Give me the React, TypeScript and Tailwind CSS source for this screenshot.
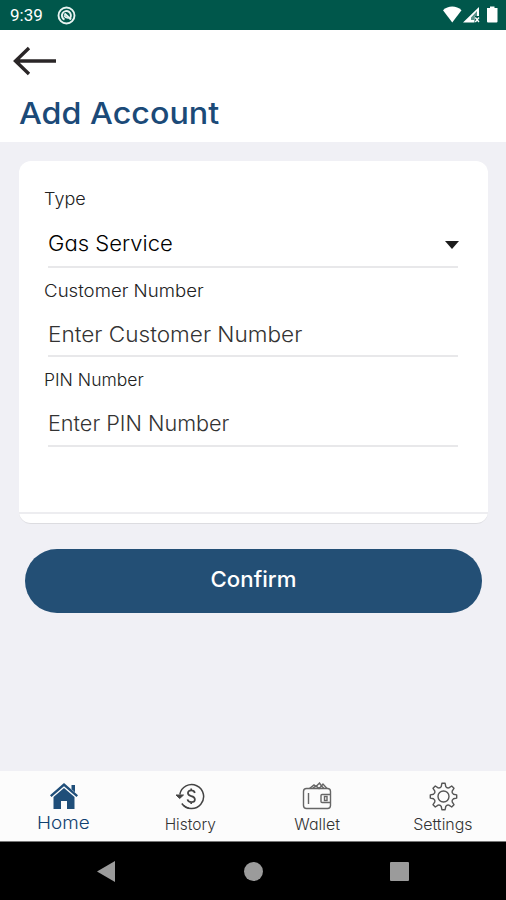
import type { ReactNode } from "react";

function StatusBar() {
  return (
    <div className="flex h-[30px] items-center bg-[#00574b] pr-[7px] pl-[10px] text-white">
      <span className="pt-px font-[Roboto,sans-serif] text-[17px] leading-none">9:39</span>
      <svg className="ml-[14px]" width="19" height="19" viewBox="0 0 19 19" fill="none" stroke="#e8f3f1">
        <circle cx="9.5" cy="9.5" r="8" strokeWidth="1.9" />
        <path d="M7.500 13.600A4.500 4.500 0 1 1 12.800 12.500" strokeWidth="1.900" />
        <path d="m7.500 7.500 6.500 6" strokeWidth="2.200" />
        <path d="M7 9.500q2 3 4.500 2.500" strokeWidth="1.500" />
      </svg>
      <svg className="ml-auto" width="56" height="18" viewBox="0 0 56 18" fill="#fff">
        <path d="M0 4.200C5-.6 13.500-.6 18.500 4.200L9.250 16.500z" />
        <path d="M36 1v9h-4.500v6.500H20z" />
        <path d="M28 11.500 34 5v5h-3v4h-3z" fill="#00574b" opacity=".65" />
        <path d="m32.300 11.500 3.700 4.500m0-4.500-3.700 4.500" stroke="#fff" strokeWidth="1.300" />
        <path d="M47 .5h4.500V2H54.500v13.500q0 1-1 1h-8.500q-1 0-1-1V2h3z" />
      </svg>
    </div>
  );
}

function Label({ children, className }: { children: ReactNode; className: string }) {
  return (
    <div className={`origin-left pl-px text-[17px] leading-[24px] font-light whitespace-nowrap text-[#222] ${className}`}>
      {children}
    </div>
  );
}

function Field({ children, className }: { children: ReactNode; className: string }) {
  return (
    <div className={`mx-[5px] flex items-center border-b-2 border-[#e8e8ea] whitespace-nowrap ${className}`}>
      {children}
    </div>
  );
}

function HomeIcon() {
  return (
    <svg width="30" height="28" viewBox="0 0 30 28" fill="#1f4e79">
      <path d="M15 1 29 13.300 27.500 15 15 4.200 2.500 15 1 13.300z" />
      <path d="M22.500 3h3.500v7.200l-3.500-3z" />
      <path d="M15 6 25.500 15v12H18v-8h-6v8H4.500V15z" />
    </svg>
  );
}

function HistoryIcon() {
  return (
    <svg width="30" height="28" viewBox="0 0 30 28" fill="none" stroke="#444" strokeWidth="1.500">
      <path d="M4.800 12.500A12 12 0 1 1 6.800 21.500" />
      <path d="M8.300 23.300A12 12 0 0 0 14 26.200" />
      <path d="M1 13 4.700 16.500 8.500 13z" fill="#444" strokeWidth="1" />
      <path d="M19.800 11q-.5-2.600-3.600-2.600-3.300 0-3.300 2.700 0 2.300 3.300 3 3.700.8 3.700 3.300 0 2.700-3.600 2.700-3.300 0-3.800-2.700M16.200 6.600v2M16.200 20v2" strokeWidth="1.700" />
    </svg>
  );
}

function WalletIcon() {
  return (
    <svg width="30" height="28" viewBox="0 0 30 28" fill="none" stroke="#666" strokeWidth="1.400">
      <rect x="1.500" y="6.500" width="27" height="20" rx="3" />
      <path d="m7.500 6.500 4.500-3.500 2 1.500L17.500 1l2 3L21 2l4 4.500M10.500 6.500l3.500-2.500 3 2.500 2.500-2.500 2.500 2.500" />
      <path d="M6.500 11v11" />
      <path d="M28.500 12.500h-8.500q-1 0-1 1v6q0 1 1 1h8.500" />
      <rect x="22.500" y="14.500" width="2.500" height="4" />
    </svg>
  );
}

const TEETH = [0, 45, 90, 135, 180, 225, 270, 315];

// The gear outline repeats one tooth and one valley eight times round the centre.
function gearPath() {
  const point = (radius: number, degrees: number) => {
    const a = (degrees * Math.PI) / 180;
    return `${(14.5 + radius * Math.cos(a)).toFixed(2)} ${(14.5 + radius * Math.sin(a)).toFixed(2)}`;
  };
  return (
    TEETH.map(
      (t, i) =>
        `${i === 0 ? "M" : "L"}${point(10.2, t - 13)}L${point(13.3, t - 7)}L${point(13.3, t + 7)}L${point(10.2, t + 13)}Q${point(8.8, t + 22.5)} ${point(10.2, t + 32)}`,
    ).join("") + "Z"
  );
}

function SettingsIcon() {
  return (
    <svg width="29" height="29" viewBox="0 0 29 29" fill="none" stroke="#555" strokeWidth="1.400" strokeLinejoin="round">
      <path d={gearPath()} />
      <circle cx="14.500" cy="14.500" r="5.500" />
    </svg>
  );
}

function Tab({ icon, label, className }: { icon: ReactNode; label: string; className: string }) {
  return (
    <div className="flex flex-1 flex-col items-center pt-[10px] pl-px">
      <div className="flex h-[30px] items-center">{icon}</div>
      <div className={`leading-[20px] ${className}`}>{label}</div>
    </div>
  );
}

export default function App() {
  return (
    <div className="flex h-[900px] w-[506px] flex-col overflow-hidden bg-[#f0f0f5] font-[Inter,'Liberation_Sans',sans-serif] [font-feature-settings:'cv11']">
      <StatusBar />
      <header className="h-[112px] bg-white">
        <svg className="mt-[16px] ml-[12px]" width="46" height="30" viewBox="0 0 46 30" fill="none" stroke="#2a2627" strokeWidth="3.400">
          <path d="M3 15h41M17 2 3.500 15 17 28" />
        </svg>
        <h1 className="mt-[17px] ml-[19px] w-[300px] origin-left scale-x-[1.075] text-[30px] leading-[40px] font-medium text-[#1b4a78]">Add Account</h1>
      </header>

      <main className="flex-1 pt-[19px] pr-[18px] pl-[19px]">
        <section className="h-[363px] rounded-[12px] border-b border-[#dcdce0] bg-white">
          <div className="h-[353px] border-b-2 border-[#ededf0] pt-[26px] pr-[25px] pl-[24px]">
            <Label className="scale-x-[1.060]">Type</Label>
            <Field className="h-[57px] pt-[10px] text-[21px] font-light text-black">
              <span className="origin-left scale-x-[1.050]">Gas Service</span>
              <svg className="mt-[3px] -mr-px ml-auto" width="14" height="8" viewBox="0 0 14 8" fill="#1c1c1c">
                <path d="M0 0h14L7 8z" />
              </svg>
            </Field>
            <Label className="mt-[11px] scale-x-[1.095]">Customer Number</Label>
            <Field className="h-[54px] pt-[11px] text-[21px] font-light text-[#333]">
              <span className="origin-left scale-x-[1.075]">Enter Customer Number</span>
            </Field>
            <Label className="mt-[11px] scale-x-[1.030]">PIN Number</Label>
            <Field className="h-[55px] pt-[11px] text-[21px] font-light text-[#333]">
              <span className="origin-left scale-x-[1.030]">Enter PIN Number</span>
            </Field>
          </div>
        </section>
        <button className="mt-[25px] ml-[6px] flex h-[64px] w-[457px] items-center justify-center rounded-[32px] bg-[#234f75] pb-[4px] text-[22px] font-medium text-white">
          <span className="scale-x-[1.010]">Confirm</span>
        </button>
      </main>

      <nav className="flex h-[70px] bg-[#fcfcfc]">
        <Tab icon={<HomeIcon />} label="Home" className="scale-x-[1.080] pt-[2px] text-[17.500px] font-light text-[#0f4070]" />
        <Tab icon={<HistoryIcon />} label="History" className="pt-[4px] text-[15.500px] font-light text-[#333]" />
        <Tab icon={<WalletIcon />} label="Wallet" className="scale-x-[1.030] pt-[4px] text-[15.500px] font-light text-[#333]" />
        <Tab icon={<SettingsIcon />} label="Settings" className="scale-x-[1.030] pt-[4px] text-[15.500px] font-light text-[#333]" />
      </nav>

      <footer className="flex h-[59px] items-center justify-between border-t border-[#777] bg-black pr-[97px] pl-[97px]">
        <svg width="18" height="21" viewBox="0 0 18 21" fill="#9b9b9b">
          <path d="M18 0v21L0 10.500z" />
        </svg>
        <div className="ml-px size-[19px] rounded-full bg-[#9b9b9b]" />
        <div className="size-[19px] rounded-[1px] bg-[#9b9b9b]" />
      </footer>
    </div>
  );
}
